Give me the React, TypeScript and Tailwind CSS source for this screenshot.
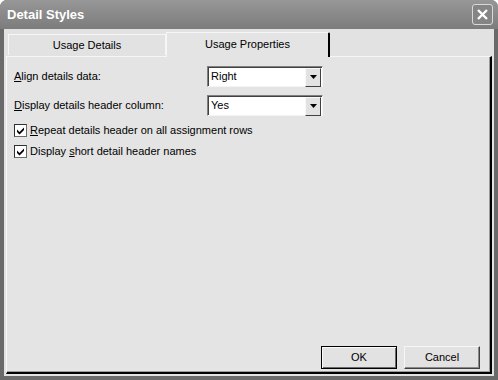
import React from "react"

const font = { fontFamily: '"Liberation Sans", Arial, sans-serif' }

function Select({ value }: { value: string }) {
  return (
    <div className="w-[116px] h-[21px] flex bg-white border-t border-l border-[#808080] shadow-[inset_1px_1px_0_#404040] border-r border-b border-r-[#f4f4f4] border-b-[#f4f4f4]">
      <div className="flex-1 flex items-center pl-[3px] text-[11px] text-black">{value}</div>
      <div className="w-[16px] h-full mt-[1px] mr-[1px] bg-[#e2e2e2] border-t border-l border-[#f8f8f8] border-r border-b border-r-[#404040] border-b-[#404040] flex items-center justify-center">
        <svg width="7" height="4" viewBox="0 0 7 4">
          <path d="M0 0h7L3.5 4z" fill="#000" />
        </svg>
      </div>
    </div>
  )
}

function Check({ children }: { children: React.ReactNode }) {
  return (
    <div className="flex items-center gap-[3px] h-[21px]">
      <div className="w-[13px] h-[13px] bg-white border border-[#6a6a6a] border-t-[#303030] border-l-[#303030] flex items-center justify-center">
        <svg width="9" height="9" viewBox="0 0 9 9">
          <path d="M1 3.5l2.5 2.5L8 1.5V4L3.5 8.5 1 6z" fill="#000" />
        </svg>
      </div>
      <span className="text-[11px] text-black">{children}</span>
    </div>
  )
}

function Button({ label, primary }: { label: string; primary?: boolean }) {
  return (
    <button
      className={
        "w-[76px] h-[23px] bg-[#e2e2e2] text-[11px] text-black flex items-center justify-center " +
        (primary
          ? "border border-black shadow-[inset_1px_1px_0_#fafafa,inset_-1px_-1px_0_#6a6a6a]"
          : "border border-[#f6f6f6] border-r-[#404040] border-b-[#404040] shadow-[inset_-1px_-1px_0_#8a8a8a]")
      }
    >
      {label}
    </button>
  )
}

export default function App() {
  return (
    <div style={font} className="w-[498px] h-[380px] bg-[#6a6a6a] rounded-t-[7px] flex flex-col overflow-hidden">
      {/* Title bar */}
      <div className="h-[29px] shrink-0 bg-gradient-to-b from-[#979797] to-[#7c7c7c] flex items-center justify-between pl-[7px] pr-[5px]">
        <span className="text-white font-bold text-[13px]">Detail Styles</span>
        <div className="w-[21px] h-[21px] rounded-[3px] border border-[#d8d8d8] bg-[#858585] flex items-center justify-center">
          <svg width="13" height="13" viewBox="0 0 13 13">
            <path d="M2 2l9 9M11 2l-9 9" stroke="#fff" strokeWidth="2.4" />
          </svg>
        </div>
      </div>

      {/* Body */}
      <div className="flex-1 mx-[4px] mb-[4px] bg-[#e2e2e2] flex flex-col px-[2px] pt-[1px] pb-[2px]">
        {/* Tabs */}
        <div className="h-[26px] flex items-end pl-[2px] relative z-10">
          <div className="w-[158px] h-[21px] mb-[1px] border-t border-l border-[#f6f6f6] border-r border-r-[#f6f6f6] flex items-center justify-center text-[11px] text-black bg-[#e2e2e2]">
            Usage Details
          </div>
          <div className="w-[164px] h-[25px] -mb-[1px] bg-[#e4e4e4] border-t border-l border-[#f6f6f6] border-r-2 border-r-black rounded-tr-[2px] flex items-center justify-center text-[11px] text-black pb-[1px]">
            Usage Properties
          </div>
        </div>

        {/* Panel */}
        <div className="flex-1 bg-[#e4e4e4] border-t border-l border-[#f6f6f6] border-r-2 border-b-2 border-r-black border-b-black shadow-[inset_-1px_-1px_0_#9a9a9a] flex flex-col pl-[7px] pr-[10px] pt-[8px] pb-[3px]">
          <div className="flex items-center h-[22px]">
            <span className="w-[193px] text-[11px] text-black">
              <span className="underline">A</span>lign details data:
            </span>
            <Select value="Right" />
          </div>
          <div className="flex items-center h-[22px] mt-[7px]">
            <span className="w-[193px] text-[11px] text-black">
              <span className="underline">D</span>isplay details header column:
            </span>
            <Select value="Yes" />
          </div>
          <div className="mt-[4px] flex flex-col">
            <Check>
              <span className="underline">R</span>epeat details header on all assignment rows
            </Check>
            <Check>
              Display <span className="underline">s</span>hort detail header names
            </Check>
          </div>
          <div className="flex-1" />
          <div className="flex justify-end gap-[7px]">
            <Button label="OK" primary />
            <Button label="Cancel" />
          </div>
        </div>
      </div>
    </div>
  )
}
